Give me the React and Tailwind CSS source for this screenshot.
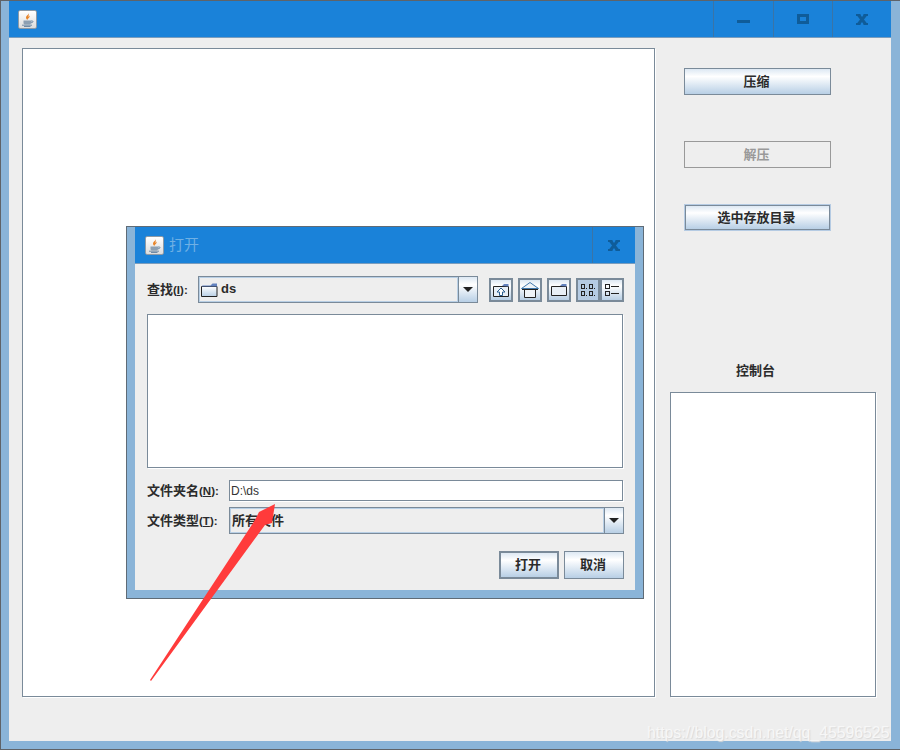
const FONT = { fontFamily: '"Liberation Sans","Noto Sans CJK SC",sans-serif' };
const GRAD = "bg-linear-to-b from-[#dde8f3] via-white via-30% to-[#b8cfe5]";

function JavaIcon() {
  return (
    <span className="flex w-[19px] h-[19px] rounded-[2px] border border-[#8d9aa6] bg-linear-to-b from-white to-[#dcdcdc] items-center justify-center">
      <svg width="15" height="15" viewBox="0 0 15 15">
        <path d="M8.5 0.5c1 2-2.5 3-2.5 5 0 1 .8 2 1.5 2.5-.3-1.5 3-2.5 2-4.500-.2 1-1 1.300-1.200 1.300.6-1.500.7-3 .2-4.300z" fill="#e8852a" />
        <path d="M3.500 8.500h7.500v2.500c0 1-1 1.500-2 1.500h-3.500c-1 0-2-.5-2-1.500z" fill="#8c9fb2" />
        <path d="M11 9h1.500c.8 0 .8 1.800-1.500 1.800" fill="none" stroke="#6f8aa5" />
        <path d="M2 13.200h10M4 14.500h6.500" stroke="#6f8aa5" />
      </svg>
    </span>
  );
}

function Glyph({ type }) {
  const c = "#0f5c99";
  if (type === "min") return <svg width="13" height="3"><rect width="13" height="3" fill={c} /></svg>;
  if (type === "max")
    return (
      <svg width="12" height="10">
        <rect x="1.500" y="1.500" width="9" height="7" fill="none" stroke={c} strokeWidth="3" />
      </svg>
    );
  return (
    <svg width="12" height="11" viewBox="0 0 12 11">
      <path d="M0 1h4.500M7.500 1H12M0 10h4.500M7.500 10H12" stroke={c} strokeWidth="2" fill="none" />
      <path d="M2.500 1l7 9M9.500 1l-7 9" stroke={c} strokeWidth="3" fill="none" />
    </svg>
  );
}

function CtlBox({ type, className }) {
  return (
    <div className={`h-full flex items-center justify-center border-l border-[#3a74a6] ${className}`}>
      <Glyph type={type} />
    </div>
  );
}

function JButton({ children, className = "" }) {
  return (
    <button className={`flex items-center justify-center pr-[2px] font-bold text-[13px] text-[#2b2b2b] border border-[#7a8a99] ${GRAD} ${className}`} style={FONT}>
      {children}
    </button>
  );
}

function FolderIcon({ w = 17, h = 15 }) {
  return (
    <svg width={w} height={h} viewBox="0 0 17 15">
      <defs>
        <linearGradient id="fg" x1="0" y1="0" x2="0" y2="1">
          <stop offset="0" stopColor="#ffffff" />
          <stop offset="1" stopColor="#b8cfe5" />
        </linearGradient>
      </defs>
      <path d="M0.500 4.500h15.500v10h-15.500z" fill="url(#fg)" stroke="#222" />
      <path d="M0.500 4.500l1-1h8l2-2h4.500v3z" fill="#6382bf" />
    </svg>
  );
}

function ToolIcon({ type }) {
  if (type === "up")
    return (
      <svg width="16" height="14" viewBox="0 0 16 14">
        <path d="M.5 3.500h15v10h-15z" fill="#e8eff6" stroke="#222" />
        <path d="M9 3l2-2h4.500v2.500z" fill="#6382bf" />
        <path d="M8 5l-4 4h2.500v3.500h3v-3.500h2.500z" fill="#fff" stroke="#2c5f8f" />
      </svg>
    );
  if (type === "home")
    return (
      <svg width="18" height="16" viewBox="0 0 18 16">
        <path d="M3.500 7.500h11v8h-11z" fill="#eef3f8" stroke="#222" />
        <path d="M.5 6.500l8.500-6 8.500 6z" fill="#eef3f8" stroke="#3f78ac" />
        <path d="M1 7.500h16" stroke="#222" />
      </svg>
    );
  if (type === "new")
    return (
      <svg width="16" height="13" viewBox="0 0 16 13">
        <path d="M.5 3.500h15v9h-15z" fill="#e8eff6" stroke="#222" />
        <path d="M9 3l2-2h4.500v2.500z" fill="#6382bf" />
      </svg>
    );
  if (type === "grid")
    return (
      <svg width="16" height="14" viewBox="0 0 16 14" fill="none" stroke="#222">
        <rect x="1.500" y="1.500" width="3" height="4" />
        <rect x="9.500" y="1.500" width="3" height="4" />
        <rect x="1.500" y="8.500" width="3" height="4" />
        <rect x="9.500" y="8.500" width="3" height="4" />
        <path d="M6 5.500h1M14 5.500h1M6 12.500h1M14 12.500h1" />
      </svg>
    );
  return (
    <svg width="16" height="14" viewBox="0 0 16 14" fill="none" stroke="#222">
      <rect x="1.500" y="1.500" width="4" height="4" />
      <rect x="1.500" y="8.500" width="4" height="4" />
      <path d="M7 3.500h8M7 10.500h8" />
    </svg>
  );
}

function ToolBtn({ type, className = "" }) {
  return (
    <div className={`w-6 h-6 flex items-center justify-center border-2 border-[#7a8a99] ${GRAD} ${className}`}>
      <ToolIcon type={type} />
    </div>
  );
}

function Arrow() {
  return (
    <div className={`w-[19px] flex items-center justify-center border-l border-[#7a8a99] ${GRAD}`}>
      <svg width="10" height="5" viewBox="0 0 10 5"><path d="M0 0h10L5 5z" fill="#222" /></svg>
    </div>
  );
}

function Combo({ className, children }) {
  return (
    <div className={`flex items-stretch border border-[#7a8a99] bg-[#eeeeee] ${className}`}>
      <div className="flex-1 flex items-center border border-[#b8cfe5] pl-[1px] overflow-hidden">{children}</div>
      <Arrow />
    </div>
  );
}

function Label({ pre, m, className = "" }) {
  return (
    <span className={`font-bold text-[13px] text-[#2b2b2b] whitespace-nowrap ${className}`} style={FONT}>
      {pre}
      <span className="text-[11.5px]">(<u>{m}</u>):</span>
    </span>
  );
}

function Dialog() {
  return (
    <div className="absolute left-[125px] top-[225px] w-[518px] h-[373px] border border-[#5f6b76] bg-[#8ab4d8] px-2 pb-2 flex flex-col">
      <div className="h-[37px] shrink-0 bg-[#1a82d9] border-b border-[#7b9dbd] flex items-center pl-[10px]">
        <JavaIcon />
        <span className="ml-[5px] text-[15px] text-[#6fb0e4]" style={FONT}>打开</span>
        <div className="ml-auto h-full"><CtlBox type="x" className="w-[43px]" /></div>
      </div>
      <div className="flex-1 bg-[#eeeeee] pl-3 pr-[11px] pt-3 flex flex-col">
        <div className="flex items-center h-[27px]">
          <Label pre="查找" m="I" className="w-[51px]" />
          <Combo className="w-[280px] h-[27px]">
            <span className="flex items-center"><FolderIcon /></span>
            <span className="ml-[3px] -mt-[2px] font-bold text-[13px] text-[#2b2b2b]" style={FONT}>ds</span>
          </Combo>
          <div className="ml-[11px] flex gap-[5px]">
            <ToolBtn type="up" />
            <ToolBtn type="home" />
            <ToolBtn type="new" />
            <div className="flex">
              <ToolBtn type="grid" className="!bg-none bg-[#b5cbe3]" />
              <ToolBtn type="list" />
            </div>
          </div>
        </div>
        <div className="mt-[11px] h-[154px] w-[476px] bg-white border border-[#7a8a99] shadow-[1px_1px_0_#ffffff]" />
        <div className="mt-3 flex items-center h-[21px]">
          <Label pre="文件夹名" m="N" className="w-[82px]" />
          <div className="w-[394px] h-[21px] bg-white border border-[#7a8a99] flex items-center pl-[1px] text-[12px] text-[#333333] shadow-[1px_1px_0_#ffffff]" style={FONT}>D:\ds</div>
        </div>
        <div className="mt-[6px] flex items-center h-[27px]">
          <Label pre="文件类型" m="T" className="w-[82px]" />
          <Combo className="w-[395px] h-[27px]">
            <span className="font-bold text-[13px] text-[#2b2b2b]" style={FONT}>所有文件</span>
          </Combo>
        </div>
        <div className="mt-[17px] flex justify-end gap-[5px]">
          <JButton className="w-[60px] h-7 !border-2">打开</JButton>
          <JButton className="w-[60px] h-7">取消</JButton>
        </div>
      </div>
    </div>
  );
}

export default function App() {
  return (
    <div className="relative w-[900px] h-[750px] bg-[#8ab4d8] border-t border-l border-b border-[#5f6368] pl-2 pr-[9px] pb-2 flex flex-col overflow-hidden" style={FONT}>
      <div className="h-[37px] shrink-0 bg-[#1a82d9] border-b border-[#7b9dbd] flex items-center pl-[9px]">
        <JavaIcon />
        <div className="ml-auto h-full flex">
          <CtlBox type="min" className="w-[60px] !items-end pb-[14px]" />
          <CtlBox type="max" className="w-[59px] !items-start pt-[13px]" />
          <CtlBox type="x" className="w-[59px] !items-start pt-[13px]" />
        </div>
      </div>
      <div className="flex-1 bg-[#eeeeee] flex">
        <div className="ml-[13px] mt-[10px] w-[633px] h-[649px] shrink-0 bg-white border border-[#7a8a99] shadow-[1px_1px_0_#ffffff]" />
        <div className="flex flex-col">
          <JButton className="ml-[29px] mt-[30px] w-[147px] h-[27px]">压缩</JButton>
          <button className="ml-[29px] mt-[46px] w-[147px] h-[27px] pr-[2px] border border-[#999999] font-bold text-[13px] text-[#999999]" style={FONT}>解压</button>
          <JButton className="ml-[29px] mt-[36px] w-[147px] h-[27px] !border-2 outline outline-[#b5cbe3] -outline-offset-1">选中存放目录</JButton>
          <span className="ml-[81px] mt-[131px] h-[17px] font-bold text-[13px] text-[#2b2b2b] leading-[17px]" style={FONT}>控制台</span>
          <div className="ml-[15px] mt-[13px] w-[206px] h-[305px] bg-white border border-[#7a8a99] shadow-[1px_1px_0_#ffffff]" />
        </div>
      </div>
      <Dialog />
      <svg className="absolute -left-px -top-px pointer-events-none" width="900" height="750">
        <polygon points="150,680 255,520 259,512 275,504 272,523 265,525 151,681" fill="#ff3b3b" />
      </svg>
      <span className="absolute left-[646px] top-[720px] text-[15.8px] text-[#f7f7f7] whitespace-nowrap [text-shadow:1px_1px_1px_#d8d8d8]" style={FONT}>https://blog.csdn.net/qq_45596525</span>
    </div>
  );
}
